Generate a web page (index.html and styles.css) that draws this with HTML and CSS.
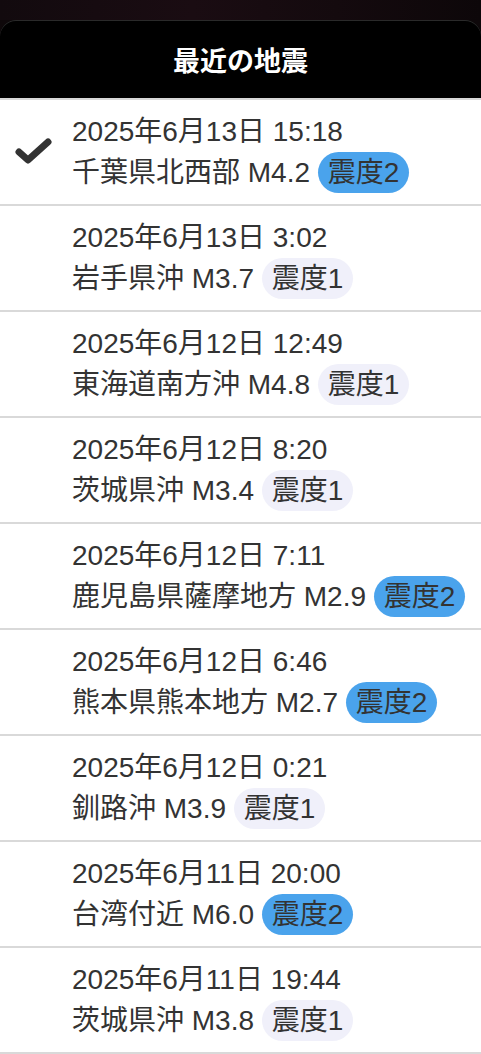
FILE: index.html
```html
<!DOCTYPE html>
<html>
  <head>
    <title>最近の地震</title>
    <link rel="stylesheet" href="styles.css">
  </head>
  <body>
    <div class="backdrop"></div>
    <div class="sheet">
      <div class="sheet-header">
        <p>最近の地震</p>
      </div>
      <div class="quake-list">
        <div class="quake-row">
          <div class="check">
            <svg width="37" height="30" viewBox="0 0 37 30">
              <polyline points="4,15 13,23 33,5" fill="none" stroke="#333333" stroke-width="7" stroke-linecap="round" stroke-linejoin="round" />
            </svg>
          </div>
          <div class="quake-info">
            <p>2025年6月13日 15:18</p>
            <p>千葉県北西部 M4.2 <span class="shindo strong">震度2</span></p>
          </div>
        </div>
        <div class="quake-row">
          <div class="check"></div>
          <div class="quake-info">
            <p>2025年6月13日 3:02</p>
            <p>岩手県沖 M3.7 <span class="shindo">震度1</span></p>
          </div>
        </div>
        <div class="quake-row">
          <div class="check"></div>
          <div class="quake-info">
            <p>2025年6月12日 12:49</p>
            <p>東海道南方沖 M4.8 <span class="shindo">震度1</span></p>
          </div>
        </div>
        <div class="quake-row">
          <div class="check"></div>
          <div class="quake-info">
            <p>2025年6月12日 8:20</p>
            <p>茨城県沖 M3.4 <span class="shindo">震度1</span></p>
          </div>
        </div>
        <div class="quake-row">
          <div class="check"></div>
          <div class="quake-info">
            <p>2025年6月12日 7:11</p>
            <p>鹿児島県薩摩地方 M2.9 <span class="shindo strong">震度2</span></p>
          </div>
        </div>
        <div class="quake-row">
          <div class="check"></div>
          <div class="quake-info">
            <p>2025年6月12日 6:46</p>
            <p>熊本県熊本地方 M2.7 <span class="shindo strong">震度2</span></p>
          </div>
        </div>
        <div class="quake-row">
          <div class="check"></div>
          <div class="quake-info">
            <p>2025年6月12日 0:21</p>
            <p>釧路沖 M3.9 <span class="shindo">震度1</span></p>
          </div>
        </div>
        <div class="quake-row">
          <div class="check"></div>
          <div class="quake-info">
            <p>2025年6月11日 20:00</p>
            <p>台湾付近 M6.0 <span class="shindo strong">震度2</span></p>
          </div>
        </div>
        <div class="quake-row">
          <div class="check"></div>
          <div class="quake-info">
            <p>2025年6月11日 19:44</p>
            <p>茨城県沖 M3.8 <span class="shindo">震度1</span></p>
          </div>
        </div>
      </div>
    </div>
  </body>
</html>
```

FILE: styles.css
```css
html,
body {
  margin: 0;
  padding: 0;
  background: #0e080a;
  overflow: hidden;
}

.backdrop {
  height: 20px;
  background: linear-gradient(90deg, #120a0e, #1a0c12 40%, #140a0e 70%, #0d0709);
}

.sheet {
  font-family: "Liberation Sans", "Noto Sans CJK JP", sans-serif;
  color: #333333;
}

.sheet-header {
  height: 78px;
  background: #000000;
  border-radius: 16px 16px 0 0;
  box-shadow: inset 0 1px 0 #2a2a2a;
  display: flex;
  align-items: center;
  justify-content: center;
}

.sheet-header p {
  margin: 0;
  color: #ffffff;
  font-size: 27px;
  font-weight: bold;
}

.quake-list {
  background: #ffffff;
  border-top: 2px solid #d9d9d9;
}

.quake-row {
  height: 104px;
  display: flex;
  align-items: center;
  border-bottom: 2px solid #d9d9d9;
}

.quake-row .check {
  width: 57px;
  padding-left: 15px;
  display: flex;
  align-items: center;
}

.quake-info p {
  margin: 0;
  font-size: 28px;
  line-height: 41px;
  white-space: nowrap;
}

.shindo {
  display: inline-block;
  line-height: 41px;
  padding: 0 10px;
  border-radius: 21px;
  background: #f0f0fa;
}

.shindo.strong {
  background: #4aa3ec;
}
```
